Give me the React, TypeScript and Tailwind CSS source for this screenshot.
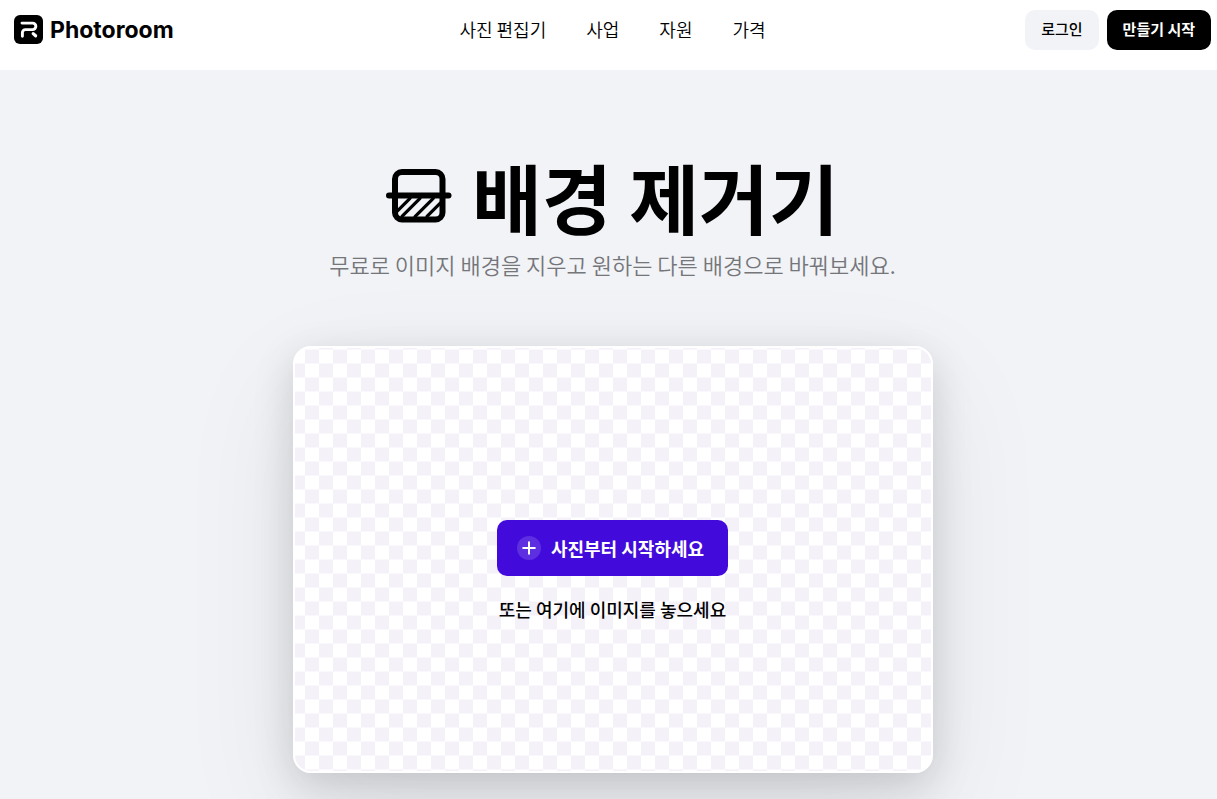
import { Plus } from 'lucide-react';

const navLinks = ['사진 편집기', '사업', '자원', '가격'];

const Logo = () => (
  <a href="#" className="flex items-center gap-[7px] text-black">
    <svg viewBox="0 0 29 29" className="size-[29px]" aria-hidden="true">
      <rect width="29" height="29" rx="6" fill="#000" />
      <path
        d="M8 8.1H18.6A3.1 3.1 0 0 1 18.6 14.6H11.4A3 3 0 0 0 8.4 17.6V21.2"
        fill="none"
        stroke="#fff"
        strokeWidth="2.9"
        strokeLinecap="round"
      />
      <path d="M19.2 18.6L21.6 20.8" stroke="#fff" strokeWidth="3.2" strokeLinecap="round" />
    </svg>
    <span className="pt-[2px] font-['Inter',sans-serif] text-[23px] leading-8 font-bold">Photoroom</span>
  </a>
);

const RemoverIcon = () => (
  <svg viewBox="0 0 66 54" className="h-[54px] w-[66px]" fill="none" stroke="#000" strokeLinecap="round" aria-hidden="true">
    <rect x="9" y="3" width="47.5" height="47.5" rx="7" strokeWidth="6" />
    <path d="M3 26.5H62.5" strokeWidth="6" />
    <path d="M11 42.3L24 29.3M16 47.4L34 29.3M29 47.6L47.3 29.3M41 47.4L54 34.3" strokeWidth="3.2" />
  </svg>
);

export default function App() {
  return (
    <div className="flex min-h-screen flex-col bg-[#f1f3f7] font-['Noto_Sans_CJK_KR',sans-serif] text-black">
      <header className="grid h-[70px] grid-cols-[1fr_auto_1fr] items-start bg-white pt-[10px] pr-[6px] pl-[14px]">
        <div className="flex h-[38px] items-center">
          <Logo />
        </div>
        <nav className="flex h-[38px] items-center gap-10 text-lg font-[350]">
          {navLinks.map(label => (
            <a key={label} href="#">{label}</a>
          ))}
        </nav>
        <div className="flex justify-end gap-2 text-[15px]">
          <button className="h-10 rounded-[10px] bg-[#f1f3f7] px-4 pb-[2px] font-medium">로그인</button>
          <button className="h-10 rounded-[10px] bg-black px-4 pb-[2px] font-bold text-white">만들기 시작</button>
        </div>
      </header>

      <main className="flex flex-1 flex-col items-center pt-[70px] pr-[6px] pb-6 pl-[14px]">
        <h1 className="flex items-center gap-5 text-[76px] leading-[112px] font-bold">
          <RemoverIcon />
          배경 제거기
        </h1>
        <p className="text-[22px] leading-6 font-[350] text-[#75767a]">
          무료로 이미지 배경을 지우고 원하는 다른 배경으로 바꿔보세요.
        </p>

        <div className="mt-[70px] flex h-[427px] w-full max-w-[640px] flex-col items-center justify-center rounded-[18px] border-2 border-white bg-[conic-gradient(#f4f1f9_25%,#fff_0_50%,#f4f1f9_0_75%,#fff_0)] bg-size-[28px_28px] bg-center pt-[22px] shadow-[0_12px_40px_rgba(0,0,0,0.15),0_40px_120px_rgba(0,0,0,0.08)]">
          <button className="flex h-14 items-center gap-[10px] rounded-[10px] bg-[#420bdb] pr-6 pl-5 text-lg font-bold text-white">
            <span className="flex size-6 items-center justify-center rounded-full bg-white/15">
              <Plus size={20} strokeWidth={2.4} />
            </span>
            사진부터 시작하세요
          </button>
          <p className="mt-5 text-lg leading-[26px] font-medium">또는 여기에 이미지를 놓으세요</p>
        </div>
      </main>
    </div>
  );
}
